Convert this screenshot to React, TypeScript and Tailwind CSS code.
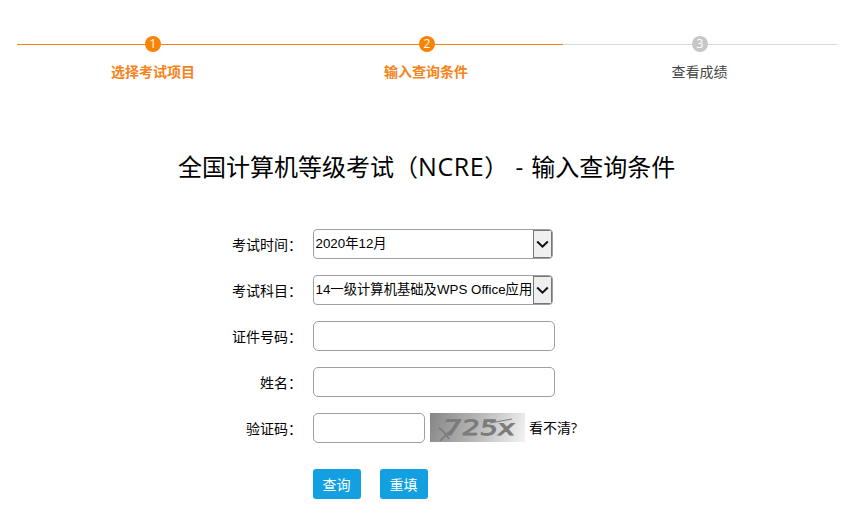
import type { ReactNode } from "react";

const steps = [
  { n: 1, label: "选择考试项目", active: true },
  { n: 2, label: "输入查询条件", active: true },
  { n: 3, label: "查看成绩", active: false },
];

function Step({ n, label, active }: { n: number; label: string; active: boolean }) {
  const line = active ? "bg-[#f28118]" : "bg-[#d8d8d8]";
  return (
    <li className="group flex w-[273px] flex-col items-center last:w-[274px]">
      <div className="flex w-full items-center">
        <span className={`h-px w-[129px] group-first:w-32 ${line}`} />
        <span
          className={`flex size-4 items-center justify-center rounded-full text-[12px] leading-4 text-white ${
            active ? "bg-[#fb8304]" : "bg-[#c6c6c6]"
          }`}
        >
          {n}
        </span>
        <span className={`h-px flex-1 ${line}`} />
      </div>
      <span
        className={`mt-[10px] mr-px text-[14px] leading-5 ${
          active ? "font-bold text-[#f58320]" : "text-[#444]"
        }`}
      >
        {label}
      </span>
    </li>
  );
}

function Row({ label, children }: { label: string; children: ReactNode }) {
  return (
    <div className="flex h-[30px] items-center">
      <label className="w-[302px] shrink-0 pt-[2px] text-right text-[14px] leading-5">{label}</label>
      <div className="ml-[11px] flex h-[30px] items-start">{children}</div>
    </div>
  );
}

function SelectBox({ value }: { value: string }) {
  return (
    <div className="flex h-[30px] w-60 overflow-hidden rounded-[4px] border border-[#a0a0a0] bg-white">
      <span className="w-[219px] shrink-0 overflow-hidden pl-[1.5px] font-['Liberation_Sans','Noto_Sans_CJK_SC',sans-serif] text-[13.33px] leading-[27px] whitespace-nowrap">
        {value}
      </span>
      <span className="flex w-[19px] items-center justify-center border border-[#777] bg-[#efefef]">
        <svg width="13" height="9" viewBox="0 0 13 9" fill="none" stroke="#111" strokeWidth="2">
          <path d="M1.2 1.5 6.5 6.7 11.8 1.5" />
        </svg>
      </span>
    </div>
  );
}

function Captcha() {
  return (
    <svg className="ml-[5px]" width="95" height="29" viewBox="0 0 95 29">
      <defs>
        <linearGradient id="shade" x1="0" y1="0" x2="95" y2="29" gradientUnits="userSpaceOnUse">
          <stop offset="0" stopColor="#868686" />
          <stop offset="0.5" stopColor="#b8b8b8" />
          <stop offset="1" stopColor="#f4f4f4" />
        </linearGradient>
      </defs>
      <rect width="95" height="29" fill="url(#shade)" />
      <g
        fill="#7b7b7b"
        stroke="#7b7b7b"
        strokeWidth="0.9"
        fontFamily="DejaVu Sans"
        fontSize="21"
        transform="translate(2 0) skewX(-8)"
      >
        <text x="14" y="22.5" textLength="71" lengthAdjust="spacingAndGlyphs">
          725x
        </text>
      </g>
      <g fill="none" stroke="#7b7b7b">
        <path d="M9 15Q14 18 19 26M26 14Q17 20 10 28" strokeWidth="1.7" />
        <path d="M15 10 17 7 31 7M60 10 82 6" strokeWidth="1" />
      </g>
    </svg>
  );
}

const field = "h-[30px] rounded-[5px] border border-[#a0a0a0] bg-white px-2 text-sm outline-none";
const button = "h-[30px] w-12 rounded-[3px] bg-[#12a0e0] pt-px pr-px text-[14px] leading-[29px] text-white";

export default function App() {
  return (
    <main className="h-[521px] w-[848px] overflow-hidden bg-white font-['Open_Sans','Noto_Sans_CJK_SC',sans-serif] text-black">
      <ol className="ml-[17px] flex w-[820px] pt-9">
        {steps.map((s) => (
          <Step key={s.n} {...s} />
        ))}
      </ol>
      <h1 className="mt-[67px] ml-[178px] h-9 text-[24px] leading-9 whitespace-pre">
        全国计算机等级考试（<span className="text-[25px] leading-none tracking-[0.6px]">NCRE</span>）
        <span className="tracking-[0.9px]">{" - "}</span>输入查询条件
      </h1>
      <form className="mt-[44px] flex flex-col gap-4">
        <Row label="考试时间：">
          <SelectBox value="2020年12月" />
        </Row>
        <Row label="考试科目：">
          <SelectBox value="14一级计算机基础及WPS Office应用" />
        </Row>
        <Row label="证件号码：">
          <input className={`${field} w-[242px]`} />
        </Row>
        <Row label="姓名：">
          <input className={`${field} w-[242px]`} />
        </Row>
        <Row label="验证码：">
          <input className={`${field} w-28`} />
          <Captcha />
          <span className="mt-[5px] ml-1 text-[14px] leading-5">看不清?</span>
        </Row>
        <div className="mt-[10px] ml-[313px] flex gap-[19px]">
          <button type="button" className={button}>查询</button>
          <button type="button" className={button}>重填</button>
        </div>
      </form>
    </main>
  );
}
